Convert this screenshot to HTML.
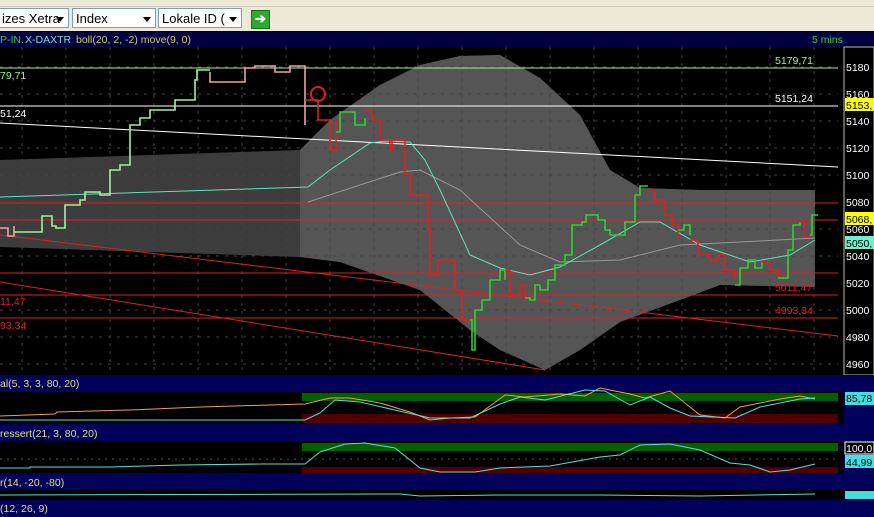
<!DOCTYPE html><html><head><style>
body{margin:0;width:874px;height:517px;overflow:hidden;background:#000;font-family:"Liberation Sans",sans-serif}
.tb{position:absolute;left:0;top:0;width:874px;height:31px;background:#ece9d8;border-bottom:1px solid #aca899}
.dd{position:absolute;top:8px;height:20px;background:#fff;border:1px solid #7f9db9;font-size:13px;line-height:20px;color:#000;box-sizing:border-box;padding-left:3px;overflow:hidden;white-space:nowrap}
.dd b{position:absolute;right:4px;top:8px;border:4px solid transparent;border-top:5px solid #000;border-bottom:0}
</style></head><body>
<div class="tb">
<div style="position:absolute;left:0;top:0;width:874px;height:6px;background:#ece9d8;border-bottom:1px solid #d0ccbc"></div>
<div class="dd" style="left:-2px;width:71px">izes Xetra<b></b></div>
<div class="dd" style="left:72px;width:84px">Index<b></b></div>
<div class="dd" style="left:158px;width:84px">Lokale ID (W<b style="background:#fff;box-shadow:0 0 0 4px #fff"></b></div>
<div style="position:absolute;left:251px;top:10px;width:17px;height:17px;background:#2fa82f;border:1px solid #1a6e1a;color:#fff;font-size:13px;line-height:16px;text-align:center;font-weight:bold">➔</div>
</div>
<svg width="874" height="517" style="position:absolute;left:0;top:0" font-family="Liberation Sans" font-size="10.5">
<rect x="0" y="31" width="874" height="16" fill="#000040"/>
<text x="0" y="43" fill="#3bd03b">P-IN.</text><text x="25" y="43" fill="#7fe0d0">X-DAXTR</text><text x="76" y="43" fill="#d0d060">boll(20, 2, -2) move(9, 0)</text>
<text x="812" y="43" fill="#3bd03b">5 mins</text>
<rect x="0" y="47" width="838" height="328" fill="#000"/>
<polygon fill="#3c3c3c" points="0,160 300,150 330,120 380,85 420,65 460,56 500,55 540,78 580,115 610,170 640,188 700,190 815,190 815,287 720,285 680,300 620,322 580,350 545,370 500,350 470,330 420,290 340,262 300,257 0,247"/>
<polygon fill="#555" points="300,150 330,120 380,85 420,65 460,56 500,55 540,78 580,115 610,170 640,188 700,190 815,190 815,287 720,285 680,300 620,322 580,350 545,370 500,350 470,330 420,290 340,262 300,257"/>
<g stroke="#444" stroke-dasharray="3,6" stroke-width="1">
<line x1="0" y1="67" x2="838" y2="67"/><line x1="0" y1="94" x2="838" y2="94"/><line x1="0" y1="121" x2="838" y2="121"/><line x1="0" y1="148" x2="838" y2="148"/><line x1="0" y1="175" x2="838" y2="175"/><line x1="0" y1="229" x2="838" y2="229"/><line x1="0" y1="256" x2="838" y2="256"/><line x1="0" y1="310" x2="838" y2="310"/><line x1="0" y1="337" x2="838" y2="337"/><line x1="0" y1="364" x2="838" y2="364"/>
</g>
<g stroke="#444" stroke-dasharray="3,5"><line x1="22" y1="47" x2="22" y2="375"/><line x1="66" y1="47" x2="66" y2="375"/><line x1="110" y1="47" x2="110" y2="375"/><line x1="154" y1="47" x2="154" y2="375"/><line x1="198" y1="47" x2="198" y2="375"/><line x1="242" y1="47" x2="242" y2="375"/><line x1="286" y1="47" x2="286" y2="375"/><line x1="330" y1="47" x2="330" y2="375"/><line x1="374" y1="47" x2="374" y2="375"/><line x1="418" y1="47" x2="418" y2="375"/><line x1="462" y1="47" x2="462" y2="375"/><line x1="506" y1="47" x2="506" y2="375"/><line x1="550" y1="47" x2="550" y2="375"/><line x1="594" y1="47" x2="594" y2="375"/><line x1="638" y1="47" x2="638" y2="375"/><line x1="682" y1="47" x2="682" y2="375"/><line x1="726" y1="47" x2="726" y2="375"/><line x1="770" y1="47" x2="770" y2="375"/><line x1="814" y1="47" x2="814" y2="375"/></g>
<line x1="0" y1="68" x2="838" y2="68" stroke="#a0f0a0"/>
<line x1="0" y1="106" x2="838" y2="106" stroke="#fff"/>
<polyline fill="none" stroke="#fff" points="0,123 440,146 838,167"/>
<g stroke="#e02020"><line x1="0" y1="203" x2="838" y2="203"/><line x1="0" y1="220" x2="838" y2="220"/><line x1="0" y1="273" x2="838" y2="273"/><line x1="0" y1="295" x2="838" y2="295"/><line x1="0" y1="318" x2="838" y2="318"/><line x1="0" y1="235" x2="838" y2="336"/><line x1="0" y1="282" x2="545" y2="370"/></g>
<polyline fill="none" stroke="#999" points="308,202 400,172 420,170 460,190 520,245 560,262 620,260 680,245 740,242 815,238"/>
<polyline fill="none" stroke="#60e0c0" points="0,197 308,187 330,170 370,143 385,141 410,142 425,160 440,190 470,255 500,268 530,275 560,267 600,245 640,222 660,222 700,245 750,262 790,255 815,240"/>
<g fill="none" stroke-width="1.6">
<polyline class="st" stroke="#f0a0a0" points="0,228 8,228 8,236 14,236 14,226"/>
<polyline class="st" stroke="#a0f0a0" points="14,232 22,232 30,232 40,232 42,216 52,226 56,228 62,228 65,205 75,205 80,200 85,192 95,192 100,195 110,170 120,165 130,125 135,125 140,118 150,110 170,110 175,100 185,100 195,80 197,70 210,70"/>
<polyline class="st" stroke="#f0a0a0" points="210,72 210,82 220,82 240,82 245,68 255,66 270,66 275,72 285,72 290,66 300,66 305,68 305,125"/>
<polyline class="st" stroke="#e02020" points="305,100 318,120 330,120 330,150 336,120"/>
<polyline class="st" stroke="#30d030" points="336,132 340,112 350,112 355,125 365,118"/>
<polyline class="st" stroke="#e02020" points="365,110 372,120 380,140 390,150 392,140 400,140 405,175 410,195 420,195 428,230 430,275 438,260 442,260 448,260 455,290 462,320 470,320"/>
<polyline class="st" stroke="#30d030" points="470,320 472,350 475,310 482,300 490,280 500,270 505,280"/>
<polyline class="st" stroke="#e02020" points="505,270 510,295 520,285 525,298"/>
<polyline class="st" stroke="#30d030" points="525,298 530,300 535,285 540,290 548,280 555,265 565,255 572,225 582,222 586,215 598,220 605,230 610,235 625,222 635,195 640,186 648,186"/>
<polyline class="st" stroke="#e02020" points="648,190 655,200 665,215 672,225 678,240"/>
<polyline class="st" stroke="#30d030" points="678,230 684,225 690,235"/>
<polyline class="st" stroke="#e02020" points="690,240 698,255 710,260 718,255 725,270 735,280"/>
<polyline class="st" stroke="#30d030" points="735,285 740,268 748,260 755,268 762,262"/>
<polyline class="st" stroke="#e02020" points="762,262 770,270 778,277"/>
<polyline class="st" stroke="#30d030" points="778,278 788,250 793,225 800,222"/>
<polyline class="st" stroke="#e02020" points="800,222 804,237 810,235"/>
<polyline class="st" stroke="#30d030" points="810,235 812,215 818,215"/>
</g>
<circle cx="318" cy="94" r="7" fill="none" stroke="#e02020" stroke-width="2"/>
<text x="0" y="79" fill="#a0f0a0">79,71</text><text x="0" y="117" fill="#fff">51,24</text><text x="0" y="305" fill="#e02020">11,47</text><text x="0" y="329" fill="#e02020">93,34</text>
<text x="775" y="64" fill="#a0f0a0">5179,71</text><text x="775" y="102" fill="#fff">5151,24</text><text x="775" y="291" fill="#e02020">5011,47</text><text x="775" y="314" fill="#e02020">4993,34</text>
<rect x="844" y="47" width="30" height="328" fill="#000" stroke="#c0c0a0"/>
<g fill="#fff"><text x="846" y="71">5180</text><text x="846" y="98">5160</text><text x="846" y="125">5140</text><text x="846" y="152">5120</text><text x="846" y="179">5100</text><text x="846" y="206">5080</text><text x="846" y="233">5060</text><text x="846" y="260">5040</text><text x="846" y="287">5020</text><text x="846" y="314">5000</text><text x="846" y="341">4980</text><text x="846" y="368">4960</text></g>
<rect x="845" y="98" width="29" height="13" fill="#ffff00"/><text x="846" y="109" fill="#000">5153,</text>
<rect x="845" y="212" width="29" height="13" fill="#ffff00"/><text x="846" y="223" fill="#000">5068,</text>
<rect x="845" y="236" width="29" height="13" fill="#70f0d0"/><text x="846" y="247" fill="#000">5050,</text>
<rect x="0" y="375" width="874" height="17" fill="#00005a"/><text x="0" y="387" fill="#e0e080">al(5, 3, 3, 80, 20)</text>
<rect x="302" y="393" width="536" height="8" fill="#006000"/><rect x="302" y="414" width="536" height="9" fill="#500000"/>
<polyline fill="none" stroke="#f0a040" points="0,416 55,414 57,412 130,410 200,407 270,405 305,404 330,398 350,398 380,403 410,412 430,420 450,418 475,417 505,395 525,397 560,394 585,396 600,388 630,394 645,398 670,391 700,415 725,418 740,407 780,399 800,396 815,399"/>
<polyline fill="none" stroke="#50e0e0" points="0,420 305,420 320,413 335,400 360,402 395,410 430,418 470,418 500,404 520,397 545,400 585,390 605,391 630,405 650,397 670,408 690,416 735,418 760,407 800,399 815,398"/>
<rect x="844" y="392" width="30" height="32" fill="#00005a"/><rect x="845" y="392" width="29" height="13" fill="#40e0e0"/><text x="846" y="402" fill="#000">85,78</text>
<rect x="0" y="424" width="874" height="17" fill="#00005a"/><text x="0" y="437" fill="#e0e080">ressert(21, 3, 80, 20)</text>
<rect x="302" y="443" width="536" height="8" fill="#006000"/><rect x="302" y="467" width="536" height="7" fill="#500000"/>
<line x1="0" y1="459" x2="838" y2="459" stroke="#555" stroke-dasharray="2,5"/>
<polyline fill="none" stroke="#50e0e0" points="0,468 30,468 30,467 110,467 180,465 260,464 305,464 320,452 345,444 365,443 395,448 420,468 440,472 475,472 500,468 550,466 600,457 620,455 640,445 670,444 700,450 730,463 750,465 770,472 790,470 815,464"/>
<rect x="844" y="441" width="30" height="32" fill="#00005a"/><rect x="845" y="442" width="29" height="12" fill="#000" stroke="#fff"/><text x="846" y="452" fill="#fff">100,0</text><rect x="845" y="455" width="29" height="13" fill="#40e0e0"/><text x="846" y="466" fill="#000">44,99</text>
<rect x="0" y="473" width="874" height="17" fill="#00005a"/><text x="0" y="486" fill="#e0e080">r(14, -20, -80)</text>
<polyline fill="none" stroke="#50e0e0" points="0,495 400,494 420,496 500,495 600,495 700,496 815,494"/>
<rect x="845" y="491" width="29" height="8" fill="#40e0e0"/>
<rect x="0" y="500" width="874" height="17" fill="#00005a"/><text x="0" y="512" fill="#e0e080">(12, 26, 9)</text>
</svg>
<script>
document.querySelectorAll('polyline.st').forEach(function(p){
var pts=p.getAttribute('points').trim().split(/\s+/).map(function(s){return s.split(',').map(Number)});
var out=[pts[0].join(',')];
for(var i=1;i<pts.length;i++){out.push(pts[i][0]+','+pts[i-1][1]);out.push(pts[i].join(','));}
p.setAttribute('points',out.join(' '));
});
</script>
</body></html>
